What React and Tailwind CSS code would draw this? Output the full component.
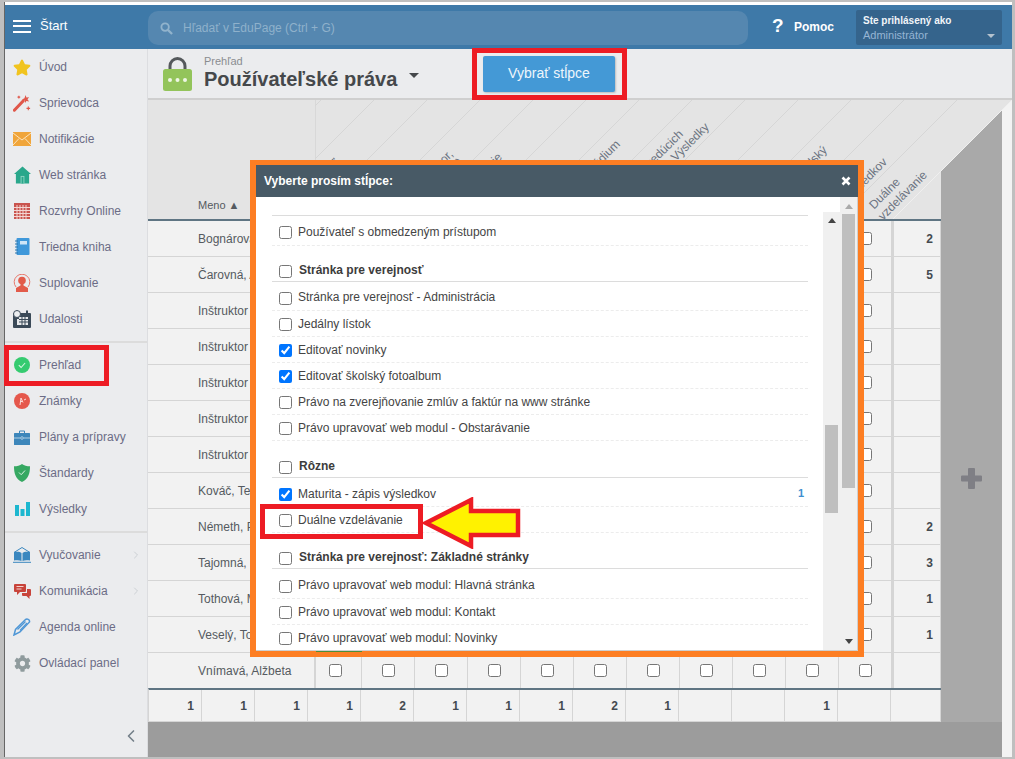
import React from 'react'
import { ChevronLeft, ChevronRight } from 'lucide-react'
import { FaCog, FaStar } from 'react-icons/fa'

const Wand = () => (
  <svg viewBox="0 0 20 20" className="w-[18px] h-[18px]">
    <path d="M1.5 18 L11 8" stroke="#e0574a" strokeWidth="3.4" strokeLinecap="round" />
    <path d="M14 1l.9 3 3-.5-1.8 2.4 1.8 2.5-3-.7-1.5 2.4-.6-3-2.8-.9 2.7-1.4z" fill="#e0574a" />
    <path d="M17 14v4M15 16h4M6.5 2v3M5 3.5h3" stroke="#e0574a" strokeWidth="1.2" />
  </svg>
)
const Mail = () => (
  <svg viewBox="0 0 18 14" className="w-[18px] h-[14px]">
    <rect width="18" height="14" fill="#f0a53a" />
    <path d="M0 1l9 7 9-7M0 13l6-6.5M18 13l-6-6.5" stroke="#fbe3bd" strokeWidth="1" fill="none" />
  </svg>
)
const House = () => (
  <svg viewBox="0 0 18 18" className="w-[17px] h-[18px]">
    <path d="M9 0l9 8h-2v10H2V8H0z" fill="#2aa78b" />
    <rect x="7" y="10" width="4" height="8" fill="#8fd4c2" />
    <rect x="8" y="11" width="2" height="7" fill="#2aa78b" />
  </svg>
)
const Grid = () => (
  <svg viewBox="0 0 16 16" className="w-[16px] h-[16px]">
    <rect width="16" height="16" fill="#c9544e" />
    <path d="M3 2v14M6 2v14M9 2v14M12 2v14M0 4.500h16M0 7.500h16M0 10.500h16M0 13.500h16" stroke="#f3d6d3" strokeWidth="1" />
  </svg>
)
const Notebook = () => (
  <svg viewBox="0 0 15 18" className="w-[15px] h-[18px]">
    <rect x="1.500" width="13" height="17" rx="1" fill="#3f98da" />
    <rect x="5" y="3" width="7" height="3.500" fill="#cfe6f7" />
    <path d="M0 3h3M0 6h3M0 9h3M0 12h3M0 15h3" stroke="#2b74ab" strokeWidth="1" />
  </svg>
)
const Person = () => (
  <svg viewBox="0 0 18 18" className="w-[18px] h-[18px]">
    <path d="M3 13A7.800 7.800 0 1 1 15 13" stroke="#e8796c" strokeWidth="1" fill="none" />
    <circle cx="9" cy="6.500" r="3.800" fill="#e25b4a" />
    <path d="M7.500 9.500h3v2l4.500 2.500v4H3v-4l4.500-2.500z" fill="#e25b4a" />
  </svg>
)
const EventCal = () => (
  <svg viewBox="0 0 18 18" className="w-[18px] h-[18px]">
    <rect y="3" width="18" height="15" rx="1" fill="#3b4a58" />
    <path d="M6 7h9v8H6z M4 9h2v6H4z" fill="#e8eaec" />
    <path d="M6 9.500h9M6 12h9M9 7v8M12 7v8" stroke="#3b4a58" strokeWidth="1" />
    <circle cx="4" cy="4" r="3.500" fill="#eceef0" stroke="#3b4a58" />
    <rect x="13" y="0.500" width="2" height="4" fill="#3b4a58" />
  </svg>
)
const CheckCircle = () => (
  <svg viewBox="0 0 16 16" className="w-[16px] h-[16px]">
    <circle cx="8" cy="8" r="8" fill="#35cb70" />
    <path d="M4.800 8.200l2.300 2.300 4-4.500" stroke="#d8f6e3" strokeWidth="1.100" fill="none" />
  </svg>
)
const Marks = () => (
  <svg viewBox="0 0 16 16" className="w-[16px] h-[16px]">
    <circle cx="8" cy="8" r="8" fill="#e5584c" />
    <path d="M6 12l1-7 2 4.500M8 8.500h-2M10 7l2-1" stroke="#fbdcd8" strokeWidth="1" fill="none" />
  </svg>
)
const Briefcase = () => (
  <svg viewBox="0 0 16 15" className="w-[16px] h-[15px]">
    <path d="M5.500 3V1h5v2" stroke="#3d86ba" strokeWidth="1" fill="none" />
    <rect y="3" width="16" height="12" rx="0.500" fill="#3d86ba" />
    <path d="M0 8h6.500M9.500 8H16" stroke="#cfe2ef" strokeWidth="0.800" />
    <circle cx="8" cy="8" r="1.300" fill="none" stroke="#cfe2ef" strokeWidth="0.700" />
  </svg>
)
const Shield = () => (
  <svg viewBox="0 0 16 18" className="w-[16px] h-[18px]">
    <path d="M8 0c2 1.500 5 2.300 8 2.300 0 7-1.500 12.500-8 15.700C1.500 14.800 0 9.300 0 2.300 3 2.300 6 1.500 8 0z" fill="#36a862" />
    <path d="M5 8.500l2.200 2.200 3.800-4.200" stroke="#dcf3e5" strokeWidth="1" fill="none" />
  </svg>
)
const Bars = () => (
  <svg viewBox="0 0 15 14" className="w-[15px] h-[14px]">
    <path d="M0 3h4v11H0zM5.500 7h4v7h-4zM11 0h4v14h-4z" fill="#1db7cf" />
  </svg>
)
const OpenBook = () => (
  <svg viewBox="0 0 18 16" className="w-[18px] h-[16px]">
    <path d="M1 5.500L9 .5l8 5" stroke="#3a87bf" strokeWidth="1" fill="none" />
    <path d="M1 5c3-.5 6-.5 7.500 1v8c-2-1-5-1-7.500-.5zM17 5c-3-.5-6-.5-7.500 1v8c2-1 5-1 7.500-.5z" fill="#3a87bf" />
    <path d="M0 15.300h18" stroke="#3a87bf" strokeWidth="1" />
  </svg>
)
const Chat = () => (
  <svg viewBox="0 0 17 16" className="w-[17px] h-[16px]">
    <path d="M1 1h10a1 1 0 0 1 1 1v6a1 1 0 0 1-1 1H6l-3 3V9H1a1 1 0 0 1-1-1V2a1 1 0 0 1 1-1z" fill="#c8443b" />
    <path d="M13 6h3a1 1 0 0 1 1 1v5a1 1 0 0 1-1 1h-.500v3l-3-3H9a1 1 0 0 1-1-1v-2h5z" fill="#c8443b" />
    <path d="M2.500 3.500h7M2.500 6h5" stroke="#f4d3d0" strokeWidth="1" />
  </svg>
)
const Pen = () => (
  <svg viewBox="0 0 18 18" className="w-[18px] h-[18px]">
    <path d="M1 17l1.500-5.500L12 2c2-2 5-.5 4.500 2L7 14z" fill="none" stroke="#4f97d6" strokeWidth="1.500" />
    <path d="M4.500 11.500l8-8M7 12.500l7-7.500" stroke="#4f97d6" strokeWidth="1.200" />
  </svg>
)

const topItems = [
  { label: 'Úvod', icon: <FaStar className="w-[19px] h-[19px] text-[#f1c41f]" /> },
  { label: 'Sprievodca', icon: <Wand /> },
  { label: 'Notifikácie', icon: <Mail /> },
  { label: 'Web stránka', icon: <House /> },
  { label: 'Rozvrhy Online', icon: <Grid /> },
  { label: 'Triedna kniha', icon: <Notebook /> },
  { label: 'Suplovanie', icon: <Person /> },
  { label: 'Udalosti', icon: <EventCal /> },
]
const midItems = [
  { label: 'Prehľad', icon: <CheckCircle /> },
  { label: 'Známky', icon: <Marks /> },
  { label: 'Plány a prípravy', icon: <Briefcase /> },
  { label: 'Štandardy', icon: <Shield /> },
  { label: 'Výsledky', icon: <Bars /> },
]
const lowItems = [
  { label: 'Vyučovanie', icon: <OpenBook />, more: true },
  { label: 'Komunikácia', icon: <Chat />, more: true },
  { label: 'Agenda online', icon: <Pen /> },
  { label: 'Ovládací panel', icon: <FaCog className="w-[17px] h-[17px] text-[#8f9b9d]" /> },
]

const SideItem = ({ item }) => (
  <div className="flex items-center h-[36px] pl-[8px] text-[12px] text-[#6c6c86]">
    <span className="w-[18px] flex justify-center shrink-0">{item.icon}</span>
    <span className="ml-[8px]">{item.label}</span>
    {item.more && <ChevronRight className="ml-auto mr-[5px] w-[12px] h-[14px] text-[#ccd0d4]" />}
  </div>
)

const Sidebar = () => (
  <div className="w-[143px] shrink-0 flex flex-col bg-[#ebecee] border-r border-[#dcdde0]">
    {topItems.map((item) => <SideItem key={item.label} item={item} />)}
    <div className="h-[10px] flex items-center"><div className="w-full border-t-2 border-[#dcdcdc]" /></div>
    {midItems.map((item) => <SideItem key={item.label} item={item} />)}
    <div className="h-[10px] flex items-center"><div className="w-full border-t-2 border-[#dcdcdc]" /></div>
    {lowItems.map((item) => <SideItem key={item.label} item={item} />)}
    <div className="mt-auto mb-[11px] flex justify-end pr-[6px]">
      <ChevronLeft className="w-[20px] h-[20px] text-[#75808a]" />
    </div>
  </div>
)

const Header = () => (
  <div className="h-[44px] shrink-0 flex bg-[#3e79a8] text-white">
    <div className="w-[143px] shrink-0 flex items-center pl-[8px] pb-[2px]">
      <div className="w-[18px] flex flex-col gap-[3.500px]">
        <div className="h-[2px] bg-white" />
        <div className="h-[2px] bg-white" />
        <div className="h-[2px] bg-white" />
      </div>
      <span className="ml-[9px] text-[13px]">Štart</span>
    </div>
    <div className="w-[600px] h-[34px] mt-[6px] rounded-[10px] bg-[#5587b0] flex items-center pl-[12px]">
      <svg viewBox="0 0 14 14" className="w-[13px] h-[13px]">
        <circle cx="5.500" cy="5.500" r="4" fill="none" stroke="#91b3cc" strokeWidth="2" />
        <path d="M8.500 8.500L13 13" stroke="#91b3cc" strokeWidth="2.400" />
      </svg>
      <span className="ml-[10px] text-[12px] text-[#8fb1cb]">Hľadať v EduPage (Ctrl + G)</span>
    </div>
    <div className="w-[108px] flex items-center pl-[24px] pb-[1px] font-bold">
      <span className="text-[19px] w-[22px]">?</span>
      <span className="text-[12px]">Pomoc</span>
    </div>
    <div className="w-[146px] h-[35px] mt-[5px] rounded-[2px] bg-[#35648c] pl-[7px] pt-[4px] relative">
      <div className="text-[10px] font-bold leading-[13px] text-[#f1f5f9]">Ste prihlásený ako</div>
      <div className="text-[11px] leading-[17px] text-[#96b5d4]">Administrátor</div>
      <div className="absolute right-[7px] bottom-[7px] w-0 h-0 border-x-[4px] border-x-transparent border-t-[4px] border-t-[#b4c2ce]" />
    </div>
  </div>
)

const Toolbar = () => (
  <div className="h-[51px] shrink-0 flex items-center pl-[15px] bg-[#ebecee] border-b-2 border-[#cfcfcf]">
    <svg viewBox="0 0 29 34" className="w-[29px] h-[34px] shrink-0">
      <path d="M7 13V9a7.500 7.500 0 0 1 15 0v4" fill="none" stroke="#55595c" strokeWidth="3" />
      <rect y="12" width="29" height="22" rx="2.500" fill="#93c45b" />
      <circle cx="7" cy="23" r="2" fill="#eef6e4" />
      <circle cx="14.500" cy="23" r="2" fill="#eef6e4" />
      <circle cx="22" cy="23" r="2" fill="#eef6e4" />
    </svg>
    <div className="w-[291px] shrink-0 pl-[12px] pb-[1px]">
      <div className="text-[11px] leading-[12px] text-[#8a8d90]">Prehľad</div>
      <div className="flex items-center">
        <span className="text-[20px] leading-[24px] font-bold text-[#45484b]">Používateľské práva</span>
        <span className="ml-[12px] mb-[7px] w-0 h-0 border-x-[5px] border-x-transparent border-t-[5px] border-t-[#45484b]" />
      </div>
    </div>
    <div className="w-[132px] h-[36px] rounded-[2px] bg-[#4499d6] shadow-[1px_1px_2px_rgba(0,0,0,0.2)] flex items-center justify-center text-[14px] text-[#eef6fc]">
      Vybrať stĺpce
    </div>
  </div>
)

const names = ['Bognárová', 'Čarovná, A', 'Inštruktor 1', 'Inštruktor 2', 'Inštruktor 3', 'Inštruktor 4', 'Inštruktor 5', 'Kováč, Tes', 'Németh, P', 'Tajomná, E', 'Tothová, M', 'Veselý, To', 'Vnímavá, Alžbeta']
const totals = ['2', '5', '', '', '', '', '', '', '2', '3', '1', '1', '']
const footer = ['1', '1', '1', '1', '2', '1', '1', '1', '2', '1', '', '', '1', '']
const checkCols = Array.from({ length: 10 }, (_, i) => i)
const diagonals = Array.from({ length: 13 }, (_, i) => 6 + i * 53)

const TableRow = ({ name, total, last }) => (
  <div className={`flex bg-[#f2f2f2] ${last ? 'h-[35px]' : 'h-[36px] border-b border-[#d5d5d5]'}`}>
    <div className="w-[168px] shrink-0 pl-[50px] flex items-center text-[12px] text-[#555a60] border-r-2 border-[#d5d5d5]">{name}</div>
    <div className="w-[46px] shrink-0 pl-[13px] flex items-center border-r border-[#d5d5d5]">
      <input type="checkbox" className="w-[13px] h-[13px]" />
    </div>
    {checkCols.map((i) => (
      <div key={i} className="w-[53px] shrink-0 flex items-center justify-center border-r border-[#d5d5d5]">
        <input type="checkbox" className="w-[13px] h-[13px]" />
      </div>
    ))}
    <div className="w-[49px] shrink-0 pr-[7px] flex items-center justify-end text-[12px] font-bold text-[#444a50] border-l-2 border-r border-[#d5d5d5]">{total}</div>
  </div>
)

const Table = () => (
  <div className="w-[793px] shrink-0 flex flex-col">
    <div className="h-[119px] flex items-end pl-[50px] pb-[6px] text-[11px] text-[#555a60] bg-[#e4e4e4]">Meno ▲</div>
    <div className="h-[2px] bg-[#5f7583]" />
    {names.map((name, i) => <TableRow key={i} name={name} total={totals[i]} last={i === names.length - 1} />)}
    <div className="h-[34px] flex bg-[#f2f2f2] border-t-2 border-[#5f7583] border-b border-b-[#d5d5d5] border-l border-l-[#d5d5d5]">
      {footer.map((v, i) => (
        <div key={i} className="w-[53px] shrink-0 pr-[7px] flex items-center justify-end text-[12px] font-bold text-[#444a50] border-r border-[#d5d5d5]">{v}</div>
      ))}
      <div className="flex-1 border-r border-[#d5d5d5]" />
    </div>
  </div>
)

// diagonal header background, the labels sit on top of it
const HeaderLines = () => (
  <svg viewBox="0 0 697 119" className="absolute left-[315px] top-[100px] w-[697px] h-[119px]">
    <path d="M0 0H697L626 71V119H0z" fill="#e4e4e4" />
    <path d="M0 0V119" stroke="#d8d8d8" strokeWidth="2" />
    {diagonals.map((x) => <path key={x} d={`M${x} 0L${x - 119} 119`} stroke="#d6d6d6" strokeWidth="1" />)}
    <path d="M697 0L578 119" stroke="#efefef" strokeWidth="1" />
  </svg>
)

const headerLabels = [
  { text: 'Učiteľ', x: 340, y: 158 },
  { text: 'Odbor,', x: 454, y: 149 },
  { text: ')', x: 464, y: 157 },
  { text: 'Hodnotenie', x: 503, y: 152 },
  { text: 'Štúdium', x: 621, y: 139 },
  { text: 'vedúcich', x: 684, y: 129 },
  { text: '- Výsledky', x: 710, y: 122 },
  { text: 'Školský', x: 828, y: 145 },
  { text: 'výsledkov', x: 888, y: 157 },
  { text: 'Duálne', x: 901, y: 177 },
  { text: 'vzdelávanie', x: 928, y: 170 },
]

const HeaderLabels = () => headerLabels.map((l) => (
  <div
    key={l.text}
    className="absolute w-[90px] h-[14px] leading-[14px] text-right text-[12px] text-[#6a7280] origin-right -rotate-45"
    style={{ left: l.x - 93, top: l.y - 4 }}
  >
    {l.text}
  </div>
))

const sections = [
  { first: 'h-[30px] pt-[2px]', items: [{ t: 'Používateľ s obmedzeným prístupom' }] },
  {
    title: 'Stránka pre verejnosť',
    head: 'h-[36px]',
    first: 'h-[29px] pt-[2px]',
    items: [
      { t: 'Stránka pre verejnosť - Administrácia' },
      { t: 'Jedálny lístok' },
      { t: 'Editovať novinky', on: true },
      { t: 'Editovať školský fotoalbum', on: true },
      { t: 'Právo na zverejňovanie zmlúv a faktúr na www stránke' },
      { t: 'Právo upravovať web modul - Obstarávanie' },
    ],
  },
  {
    title: 'Rôzne',
    head: 'h-[37px]',
    first: 'h-[29px] pt-[3px]',
    items: [
      { t: 'Maturita - zápis výsledkov', on: true, count: 1 },
      { t: 'Duálne vzdelávanie' },
    ],
  },
  {
    title: 'Stránka pre verejnosť: Základné stránky',
    head: 'h-[36px]',
    first: 'h-[30px] pt-[3px]',
    items: [
      { t: 'Právo upravovať web modul: Hlavná stránka' },
      { t: 'Právo upravovať web modul: Kontakt' },
      { t: 'Právo upravovať web modul: Novinky' },
    ],
  },
]

const ModalRow = ({ item, size }) => (
  <div className={`flex items-center pl-[7px] pr-[4px] text-[12px] text-[#444] border-b border-dashed border-[#ececec] ${size}`}>
    <input type="checkbox" defaultChecked={item.on} className="w-[13px] h-[13px] mt-[2px] shrink-0" />
    <span className="ml-[6px]">{item.t}</span>
    {item.count && <span className="ml-auto text-[#3f8fd0] font-bold text-[11px]">{item.count}</span>}
  </div>
)

const Triangle = ({ down, color }) => (
  <svg viewBox="0 0 8 5" className="w-[8px] h-[5px]">
    <path d={down ? 'M0 0h8L4 5z' : 'M0 5h8L4 0z'} fill={color} />
  </svg>
)

const Modal = () => (
  <div className="absolute left-[250px] top-[160px] w-[614px] h-[497px] border-[6px] border-t-[5px] border-[#fd7e23] bg-white flex flex-col">
    <div className="h-[32px] shrink-0 bg-[#485a66] flex items-center justify-between pl-[8px] pr-[7px] text-white">
      <span className="text-[12px] font-bold">Vyberte prosím stĺpce:</span>
      <svg viewBox="0 0 10 10" className="w-[10px] h-[10px]">
        <path d="M1.500 1.500l7 7M8.500 1.500l-7 7" stroke="#fff" strokeWidth="2.600" />
      </svg>
    </div>
    <div className="flex-1 flex min-h-0 border-b border-r border-[#cfcfcf]">
      <div className="w-[567px] shrink-0 pl-[16px] pr-[15px] overflow-hidden">
        <div className="h-[19px] border-b border-[#dcdcdc]" />
        {sections.map((s) => (
          <div key={s.items[0].t}>
            {s.title && (
              <div className={`flex items-end pl-[7px] pb-[2px] border-b border-[#dcdcdc] text-[12px] font-bold text-[#3c3c3c] ${s.head}`}>
                <input type="checkbox" className="w-[13px] h-[13px] mb-[1px] shrink-0" />
                <span className="ml-[7px]">{s.title}</span>
              </div>
            )}
            {s.items.map((item, i) => <ModalRow key={item.t} item={item} size={i === 0 ? s.first : 'h-[26px]'} />)}
          </div>
        ))}
      </div>
      <div className="w-[17px] shrink-0 mt-[15px] bg-[#f0f0f0] flex flex-col">
        <div className="h-[18px] pt-[6px] flex justify-center"><Triangle color="#444" /></div>
        <div className="mt-[195px] ml-[2px] w-[13px] h-[88px] bg-[#bfbfbf]" />
      </div>
      <div className="w-[17px] shrink-0 bg-[#f0f0f0] flex flex-col">
        <div className="h-[17px] pt-[7px] flex justify-center"><Triangle color="#aaa" /></div>
        <div className="ml-[2px] w-[13px] h-[274px] bg-[#bfbfbf]" />
        <div className="mt-auto pb-[6px] flex justify-center"><Triangle down color="#444" /></div>
      </div>
    </div>
  </div>
)

const RedBox = ({ className }) => <div className={`absolute border-[5px] border-[#ed1c24] ${className}`} />

const Arrow = () => (
  <svg viewBox="0 0 100 52" className="absolute left-[422px] top-[497px] w-[100px] h-[52px]">
    <path d="M4 26L49 3V14H96V38H49V49z" fill="#fff200" stroke="#ed1c24" strokeWidth="4.500" />
  </svg>
)

export default function App() {
  return (
    <div className="relative w-[1015px] h-[759px] overflow-hidden font-['Liberation_Sans',Arial,sans-serif]">
      <div className="w-full h-full flex border-[#bfbfbf] border-t-2 border-l-4 border-r-[3px] border-b-2 bg-white">
        <div className="flex-1 flex flex-col pt-[3px] min-w-0 border-l border-[#666]">
          <Header />
          <div className="flex-1 flex min-h-0">
            <Sidebar />
            <div className="flex-1 flex flex-col min-w-0">
              <Toolbar />
              <div className="flex-1 flex bg-[#f3f3f3] min-h-0">
                <div className="w-[854px] shrink-0 flex flex-col bg-[#9c9c9c]">
                  <div className="flex bg-[#a9a9a9]">
                    <Table />
                    <div className="flex-1 flex justify-center pt-[366px]">
                      <svg viewBox="0 0 25 25" className="w-[25px] h-[25px]">
                        <path d="M9 3a1 1 0 0 1 1-1h5a1 1 0 0 1 1 1v6.500h6a1 1 0 0 1 1 1v4a1 1 0 0 1-1 1h-6V22a1 1 0 0 1-1 1h-5a1 1 0 0 1-1-1v-6.500H3a1 1 0 0 1-1-1v-4a1 1 0 0 1 1-1h6z" fill="#7f7f85" />
                      </svg>
                    </div>
                  </div>
                </div>
              </div>
            </div>
          </div>
        </div>
      </div>
      <HeaderLines />
      <HeaderLabels />
      <Modal />
      <div className="absolute left-[316px] top-[651px] w-[46px] h-px bg-[#4b8f3a]" />
      <RedBox className="left-[472px] top-[48px] w-[155px] h-[52px]" />
      <RedBox className="left-[4px] top-[345px] w-[105px] h-[41px]" />
      <RedBox className="left-[260px] top-[504px] w-[163px] h-[35px]" />
      <Arrow />
    </div>
  )
}
